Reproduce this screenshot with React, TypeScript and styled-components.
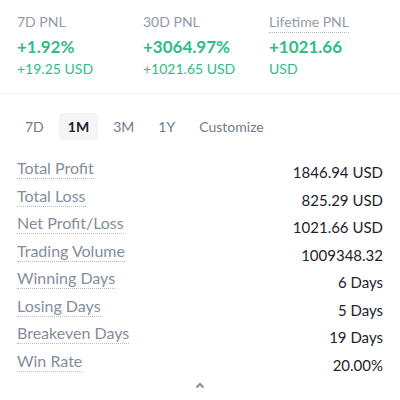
import React from 'react';
import styled, { createGlobalStyle } from 'styled-components';

const GlobalStyle = createGlobalStyle`
  html, body {
    margin: 0;
    padding: 0;
    background: #ffffff;
  }
  body {
    font-family: Lato, "Noto Sans", sans-serif;
    color: #1e2329;
  }
`;

const summary = [
  { title: '7D PNL', main: '+1.92%', sub: '+19.25 USD', dotted: false },
  { title: '30D PNL', main: '+3064.97%', sub: '+1021.65 USD', dotted: false },
  { title: 'Lifetime PNL', main: '+1021.66', sub: 'USD', dotted: true },
];

const tabs = ['7D', '1M', '3M', '1Y', 'Customize'];

const stats = [
  ['Total Profit', '1846.94 USD'],
  ['Total Loss', '825.29 USD'],
  ['Net Profit/Loss', '1021.66 USD'],
  ['Trading Volume', '1009348.32'],
  ['Winning Days', '6 Days'],
  ['Losing Days', '5 Days'],
  ['Breakeven Days', '19 Days'],
  ['Win Rate', '20.00%'],
];

export default function App() {
  return (
    <Page>
      <GlobalStyle />
      <Summary>
        {summary.map((s) => (
          <SummaryCol key={s.title}>
            <SummaryTitle $dotted={s.dotted}>{s.title}</SummaryTitle>
            <MainValue>{s.main}</MainValue>
            <SubValue>{s.sub}</SubValue>
          </SummaryCol>
        ))}
      </Summary>
      <Divider />
      <Tabs>
        {tabs.map((t) => (
          <Tab key={t} $active={t === '1M'}>
            {t}
          </Tab>
        ))}
      </Tabs>
      <StatList>
        {stats.map(([label, value]) => (
          <StatRow key={label}>
            <StatLabel>{label}</StatLabel>
            <StatValue>{value}</StatValue>
          </StatRow>
        ))}
      </StatList>
      <Collapse>
        <svg width="12" height="8" viewBox="0 0 12 8">
          <path d="M2.5 6.5 L6 3 L9.5 6.5" fill="none" stroke="#848e9c" strokeWidth="2" />
        </svg>
      </Collapse>
    </Page>
  );
}

const Page = styled.div`
  width: 400px;
  height: 400px;
  overflow: hidden;
`;

const Summary = styled.div`
  display: grid;
  grid-template-columns: 126px 126px 1fr;
  padding: 12px 0 0 17px;
  height: 82px;
  box-sizing: border-box;
`;

const SummaryCol = styled.div`
  display: flex;
  flex-direction: column;
  align-items: flex-start;
`;

const SummaryTitle = styled.span<{ $dotted: boolean }>`
  font-size: 14px;
  line-height: 20px;
  color: #929aa5;
  border-bottom: 1px dotted ${(p) => (p.$dotted ? '#b7bdc6' : 'transparent')};
`;

const MainValue = styled.span`
  margin-top: 2px;
  font-size: 17px;
  line-height: 24px;
  font-weight: 700;
  color: #2ebd85;
`;

const SubValue = styled.span`
  font-size: 14px;
  line-height: 20px;
  color: #2ebd85;
`;

const Divider = styled.div`
  height: 1px;
  margin-top: 11px;
  background: #f2f3f5;
`;

const Tabs = styled.div`
  display: flex;
  align-items: center;
  gap: 6px;
  padding: 19px 0 0 16px;
`;

const Tab = styled.div<{ $active: boolean }>`
  height: 27px;
  min-width: 17px;
  padding: 0 9px;
  display: flex;
  align-items: center;
  justify-content: center;
  border-radius: 4px;
  font-size: 14px;
  font-weight: ${(p) => (p.$active ? 700 : 400)};
  color: ${(p) => (p.$active ? '#1e2329' : '#707a8a')};
  background: ${(p) => (p.$active ? '#f5f5f5' : 'transparent')};
`;

const StatList = styled.div`
  display: flex;
  flex-direction: column;
  padding: 15px 17px 0 17px;
`;

const StatRow = styled.div`
  display: flex;
  justify-content: space-between;
  align-items: center;
  height: 27.5px;
`;

const StatLabel = styled.span`
  font-size: 16px;
  line-height: 20px;
  color: #848e9c;
  border-bottom: 1px dotted #b7bdc6;
`;

const StatValue = styled.span`
  font-size: 15px;
  line-height: 20px;
  color: #1e2329;
  margin-top: 7px;
`;

const Collapse = styled.div`
  display: flex;
  justify-content: center;
  padding-top: 6px;
`;
